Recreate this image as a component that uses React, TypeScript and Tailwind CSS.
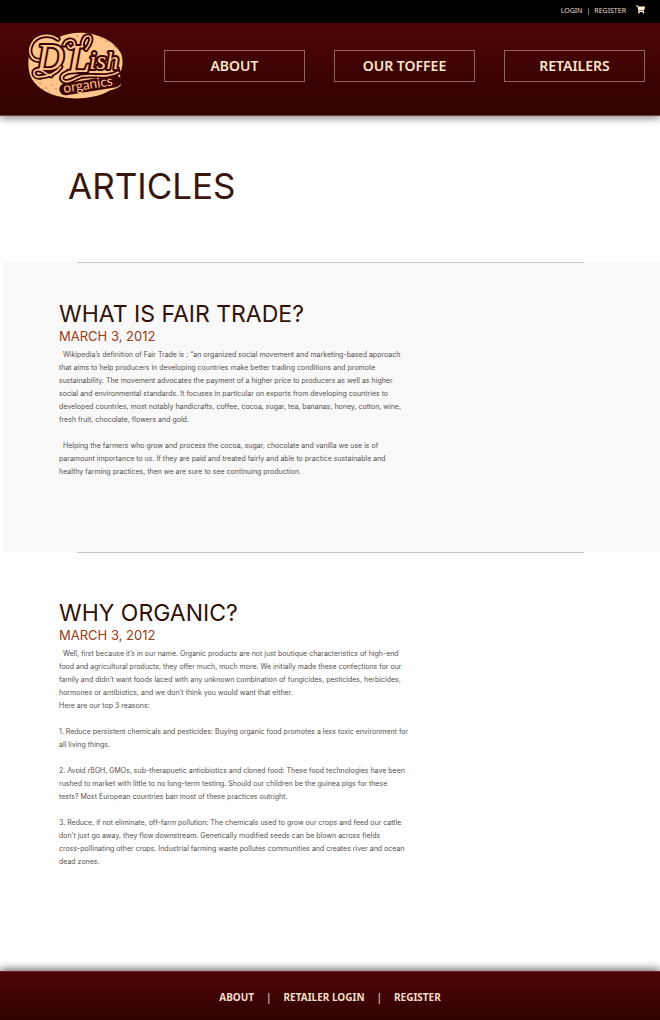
import type { ReactNode } from "react";
import { FaShoppingCart } from "react-icons/fa";

const navItems = ["ABOUT", "OUR TOFFEE", "RETAILERS"];

function Logo() {
  return (
    <svg viewBox="0 0 330 240" className="h-20 w-[110px] shrink-0" role="img" aria-label="D'Lish organics">
      <path
        d="M27 90C22 56 34 30 66 26c18-2 34 4 46 12 36-17 80-18 112-9 40 11 68 32 80 58 6 22 4 40-4 58l2 36c-4 8-20 12-36 17-32 20-100 28-140 18-48-8-84-34-96-66-6-20-6-40-3-60Z"
        fill="#ffc68c"
      />
      <g fill="none" stroke="#450304" strokeWidth="2" opacity=".5">
        <path d="M58 172l8 6M76 184l3 8M92 178l6 2M258 44l5 7M282 60l6 10M278 82l8 3M168 32l8 3M288 104l7 2M66 190l4 2M106 190l6 3M240 38l4 3M46 164l3 3M84 200l4 3M292 124l4 4" />
      </g>
      <path d="M136 193L286 169" stroke="#3b0203" strokeWidth="36" strokeLinecap="round" />
      <g fill="none" strokeLinecap="round" strokeLinejoin="round" stroke="#3b0203" strokeWidth="16">
        <path d="M56 106C30 104 24 78 34 58 48 28 90 24 114 42" />
        <path d="M122 126c-14 20-40 28-62 30-22 2-24-22-6-22 16 0 18 12 40 18" />
        <path d="M132 60c6-18 32-20 32-2 0 14-18 16-20 4" />
        <path d="M170 140c-36-2-52 14-42 26 12 14 40-10 60-13 38-5 72 8 107-11" />
        <path d="M186 66c0-20 8-34 20-33 12 2 6 24-8 40" />
      </g>
      <g fontFamily="'Liberation Serif', serif" fontStyle="italic" fill="#ffc68c" stroke="#3b0203" strokeWidth="12" strokeLinejoin="round" paintOrder="stroke">
        <text x="50" y="134" fontSize="112">D</text>
        <text x="144" y="141" fontSize="122">L</text>
        <text x="208" y="132" fontSize="76">ish</text>
      </g>
      <g fill="none" strokeLinecap="round" strokeLinejoin="round" stroke="#ffc68c" strokeWidth="5">
        <path d="M56 106C30 104 24 78 34 58 48 28 90 24 114 42" />
        <path d="M122 126c-14 20-40 28-62 30-22 2-24-22-6-22 16 0 18 12 40 18" />
        <path d="M132 60c6-18 32-20 32-2 0 14-18 16-20 4" />
        <path d="M170 140c-36-2-52 14-42 26 12 14 40-10 60-13 38-5 72 8 107-11" />
        <path d="M186 66c0-20 8-34 20-33 12 2 6 24-8 40" />
      </g>
      <text x="132" y="204" fontSize="41" fontFamily="Lato, sans-serif" fill="#ffc68c" transform="rotate(-9 132 204)">
        organics
      </text>
    </svg>
  );
}

function Article({ title, className, children }: { title: string; className: string; children: ReactNode }) {
  return (
    <article className={className}>
      <hr className="mr-[76px] ml-[74px] border-[#cac6c7]" />
      <div className="pl-14">
        <h2 className="text-[23px] leading-7 text-[#321008]">{title}</h2>
        <p className="text-[13px] leading-4 text-[#974012]">MARCH 3, 2012</p>
        <div className="mt-1 flex flex-col gap-[13px] text-[7px] leading-[13px] text-[#55504e]">{children}</div>
      </div>
    </article>
  );
}

export default function App() {
  return (
    <div className="bg-white font-['Noto_Sans',sans-serif]">
      <div className="flex h-[23px] items-center justify-end bg-black pr-[15px] text-[7px] text-[#eadccb]">
        <a href="#login">LOGIN</a>
        <span className="px-1">|</span>
        <a href="#register">REGISTER</a>
        <a href="#cart" aria-label="Cart" className="mb-1 ml-[10px] text-[#fff0dc]">
          <FaShoppingCart className="size-[9px]" />
        </a>
      </div>

      <header className="flex h-[93px] items-start border-b border-[#6b4546] bg-linear-to-b from-[#4d0405] to-[#310202] pr-[15px] pl-5 shadow-[0_2px_8px_rgba(0,0,0,0.5)]">
        <a href="#home" className="mt-[2px]">
          <Logo />
        </a>
        <nav className="mt-[27px] ml-[34px] grid flex-1 grid-cols-3 gap-[29px]">
          {navItems.map((item) => (
            <a
              key={item}
              href="#nav"
              className="flex h-8 items-center justify-center border border-[#8d6660] text-sm font-semibold text-[#fae5cd]"
            >
              {item}
            </a>
          ))}
        </nav>
      </header>

      <main className="font-[Inter,sans-serif]">
        <h1 className="pt-[46px] pb-[52px] pl-[68px] text-[35px] leading-[48px] text-[#3a150c]">ARTICLES</h1>

        <Article title="WHAT IS FAIR TRADE?" className="ml-[3px] bg-[#f9f9f9] pb-[74px] [&>hr]:mb-[37px]">
          <p>
            &nbsp;&nbsp;Wikipedia’s definition of Fair Trade is : “an organized social movement and marketing-based approach
            <br />
            that aims to help producers in developing countries make better trading conditions and promote
            <br />
            sustainability. The movement advocates the payment of a higher price to producers as well as higher
            <br />
            social and environmental standards. It focuses in particular on exports from developing countries to
            <br />
            developed countries, most notably handicrafts, coffee, cocoa, sugar, tea, bananas, honey, cotton, wine,
            <br />
            fresh fruit, chocolate, flowers and gold.
          </p>
          <p>
            &nbsp;&nbsp;Helping the farmers who grow and process the cocoa, sugar, chocolate and vanilla we use is of
            <br />
            paramount importance to us. If they are paid and treated fairly and able to practice sustainable and
            <br />
            healthy farming practices, then we are sure to see continuing production.
          </p>
        </Article>

        <Article title="WHY ORGANIC?" className="ml-[3px] pb-[103px] [&>hr]:mb-[46px]">
          <p>
            &nbsp;&nbsp;Well, first because it’s in our name. Organic products are not just boutique characteristics of high-end
            <br />
            food and agricultural products, they offer much, much more. We initially made these confections for our
            <br />
            family and didn’t want foods laced with any unknown combination of fungicides, pesticides, herbicides,
            <br />
            hormones or antibiotics, and we don’t think you would want that either.
            <br />
            Here are our top 3 reasons:
          </p>
          <p>
            1. Reduce persistent chemicals and pesticides: Buying organic food promotes a less toxic environment for
            <br />
            all living things.
          </p>
          <p>
            2. Avoid rBGH, GMOs, sub-therapuetic antiobiotics and cloned food: These food technologies have been
            <br />
            rushed to market with little to no long-term testing. Should our children be the guinea pigs for these
            <br />
            tests? Most European countries ban most of these practices outright.
          </p>
          <p>
            3. Reduce, if not eliminate, off-farm pollution: The chemicals used to grow our crops and feed our cattle
            <br />
            don’t just go away, they flow downstream. Genetically modified seeds can be blown across fields
            <br />
            cross-pollinating other crops. Industrial farming waste pollutes communities and creates river and ocean
            <br />
            dead zones.
          </p>
        </Article>
      </main>

      <footer className="flex h-[49px] items-center justify-center gap-3 border-t border-[#6b2526] bg-linear-to-b from-[#4d0405] to-[#310202] pt-[2px] text-[10px] font-bold text-[#f3dec8] shadow-[0_-2px_8px_rgba(0,0,0,0.6)]">
        <a href="#about">ABOUT</a>
        <span className="font-medium">|</span>
        <a href="#retailer-login">RETAILER LOGIN</a>
        <span className="font-medium">|</span>
        <a href="#register">REGISTER</a>
      </footer>
    </div>
  );
}
